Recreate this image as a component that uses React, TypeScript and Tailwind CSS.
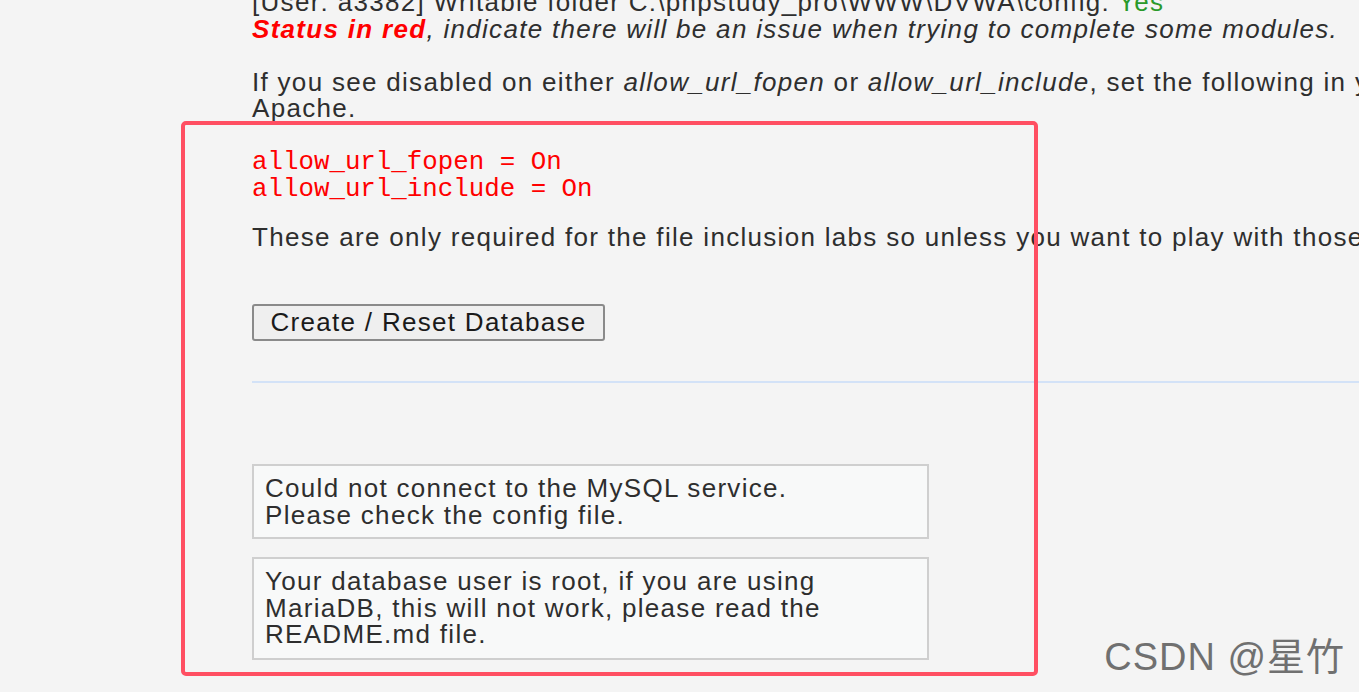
export default function App() {
  return (
    <div className="relative h-[692px] w-[1359px] overflow-hidden bg-[#f4f4f4] font-['Liberation_Sans',Arial,sans-serif] text-[26px] leading-[26.5px] tracking-[1.3px] text-[#2e2e2e]">
      <div className="w-[1400px] pl-[252px] whitespace-nowrap">
        {/* status lines */}
        <div className="-mt-[11px]">
          [User: a3382] Writable folder C:\phpstudy_pro\WWW\DVWA\config: <span className="text-[#2a9a2a]">Yes</span>
        </div>
        <div className="italic">
          <span className="font-bold text-[#ff0000]">Status in red</span>, indicate there will be an issue when trying to complete some modules.
        </div>
        <div className="mt-[26.5px]">
          If you see disabled on either <i>allow_url_fopen</i> or <i>allow_url_include</i>, set the following in your php.ini file and restart
        </div>
        <div>Apache.</div>

        <pre className="mt-[27px] font-['Liberation_Mono','Courier_New',monospace] text-[25.8px] leading-[27px] tracking-normal text-[#ff0000]">
          {'allow_url_fopen = On\nallow_url_include = On'}
        </pre>

        <div className="mt-[21px]">
          These are only required for the file inclusion labs so unless you want to play with those, you can ignore them.
        </div>

        <div className="mt-[54px]">
          <button className="h-[37px] w-[353px] rounded-[3px] border-2 border-[#8a8a8a] bg-[#efefef] text-[26px] tracking-[1.3px] text-[#1a1a1a]">
            Create / Reset Database
          </button>
        </div>

        <div className="mt-[40px] h-[2px] w-[1200px] bg-[#d3e2f7]" />

        <div className="mt-[81px] w-[677px] border-2 border-[#cfcfcf] bg-[#f8f9f9] px-[11px] pt-[9px] pb-[9px] whitespace-normal">
          Could not connect to the MySQL service.<br />Please check the config file.
        </div>
        <div className="mt-[18px] w-[677px] border-2 border-[#cfcfcf] bg-[#f8f9f9] px-[11px] pt-[9px] pb-[10px] whitespace-normal">
          Your database user is root, if you are using<br />MariaDB, this will not work, please read the<br />README.md file.
        </div>
      </div>

      {/* annotation rectangle */}
      <div className="absolute left-[181px] top-[121px] h-[555px] w-[857px] rounded-[5px] border-[4px] border-[#ff4f62]" />

      {/* watermark */}
      <div className="absolute right-[14px] top-[634px] font-['Liberation_Sans','Noto_Sans_CJK_SC',sans-serif] text-[38px] leading-[46px] tracking-[1px] text-[#707070]">
        CSDN @星竹
      </div>
    </div>
  );
}
